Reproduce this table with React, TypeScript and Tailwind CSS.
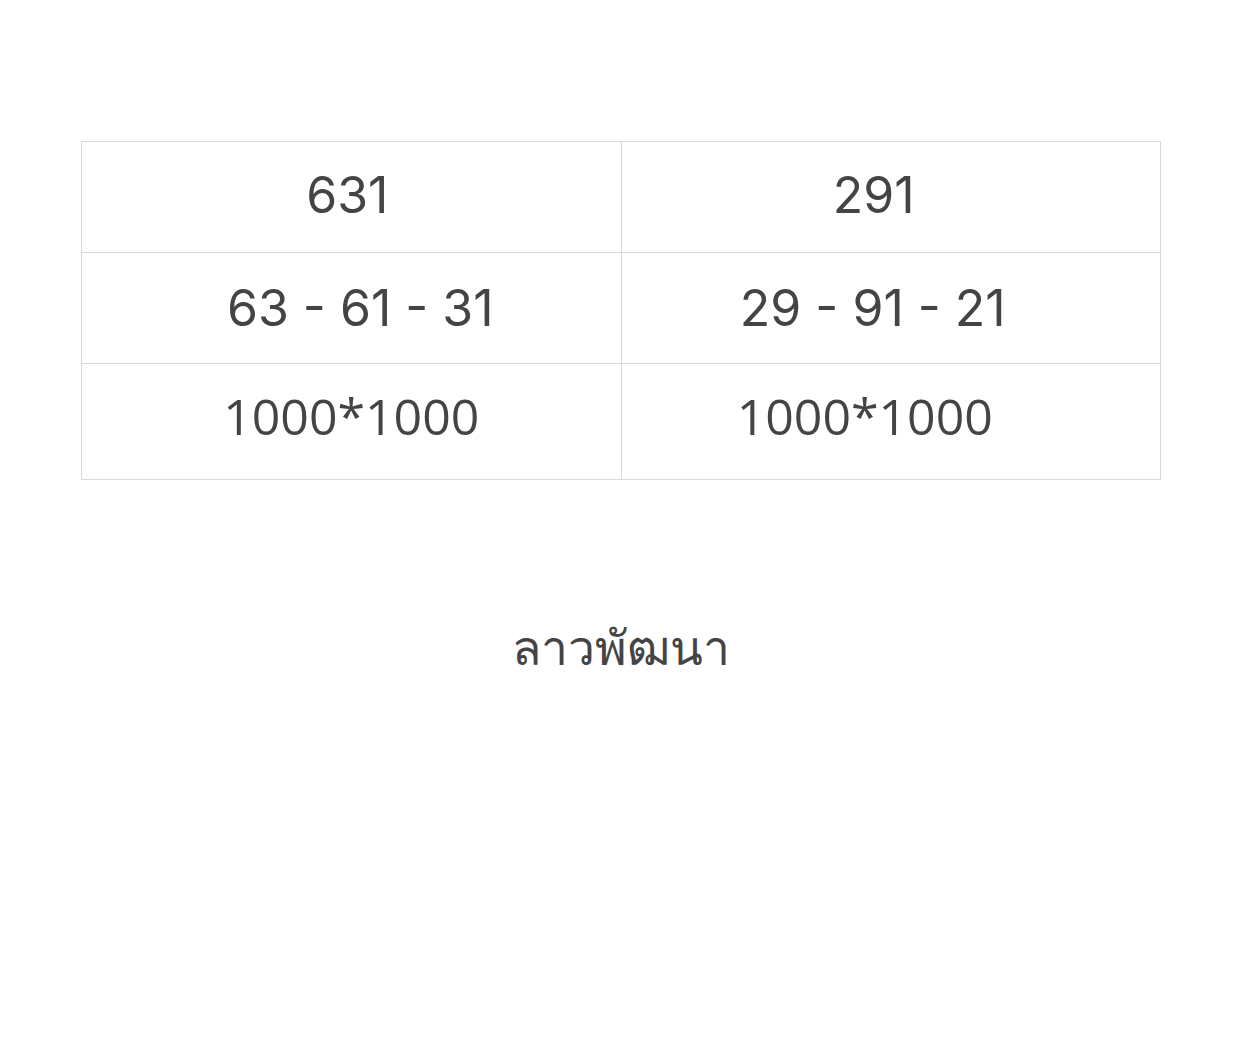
export default function App() {
  return (
    <div className="min-h-[1060px] bg-white pt-[141px]">
      <div className="mx-auto w-[1080px]">
        <table className="w-full border-collapse text-[#444]">
          <tbody>
            <tr className="h-[111px]">
              <td className="w-1/2 border border-[#d9d9d9] text-center text-[50px] font-[family-name:Inter,sans-serif] pr-[8px] pb-[3px]">631</td>
              <td className="w-1/2 border border-[#d9d9d9] text-center text-[50px] font-[family-name:Inter,sans-serif] pr-[34px] pb-[3px]">291</td>
            </tr>
            <tr className="h-[111px]">
              <td className="border border-[#d9d9d9] text-center text-[50px] font-[family-name:Inter,sans-serif] pl-[18px]">63 - 61 - 31</td>
              <td className="border border-[#d9d9d9] text-center text-[50px] font-[family-name:Inter,sans-serif] pr-[36px]">29 - 91 - 21</td>
            </tr>
            <tr className="h-[116px]">
              <td className="border border-[#d9d9d9] text-center text-[50px] font-[family-name:'Open_Sans',sans-serif] pb-[10px]">1000*1000</td>
              <td className="border border-[#d9d9d9] text-center text-[50px] font-[family-name:'Open_Sans',sans-serif] pr-[52px] pb-[10px]">1000*1000</td>
            </tr>
          </tbody>
        </table>
        <div className="mt-[131px] text-center text-[48px] text-[#444] font-[family-name:'Noto_Sans',sans-serif]">ลาวพัฒนา</div>
      </div>
    </div>
  );
}
